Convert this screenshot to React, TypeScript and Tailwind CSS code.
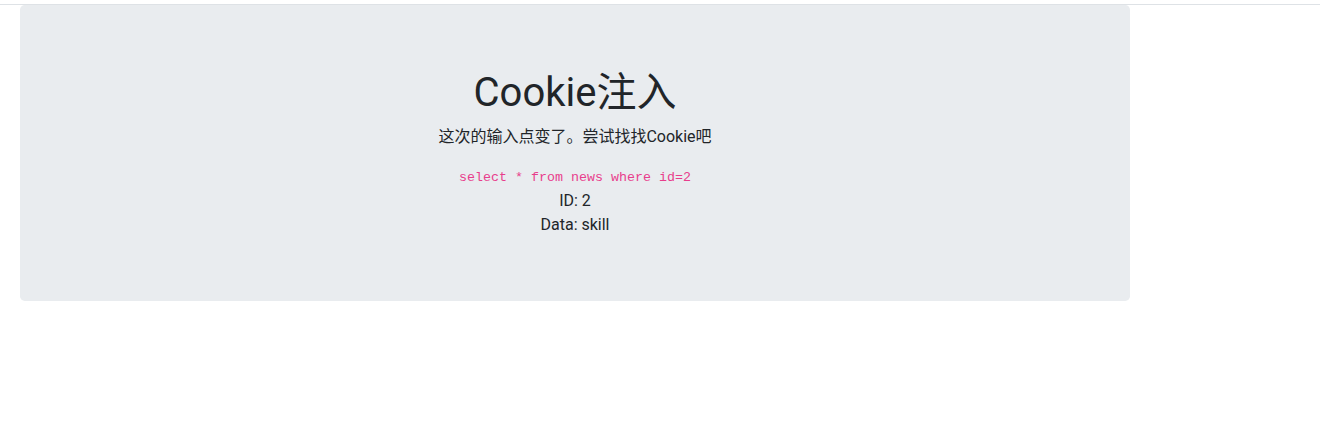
export default function App() {
  return (
    <div
      className="min-h-[446px] bg-white text-[#212529]"
      style={{ fontFamily: 'Roboto, "Noto Sans CJK SC", sans-serif' }}
    >
      <div className="h-[5px] border-b border-[#dee2e6]" />
      <div className="pl-[20px] w-[1130px]">
        <div className="bg-[#e9ecef] rounded-[4.8px] px-8 pt-[64px] pb-[64px] text-center">
          <h1 className="text-[40px] leading-[48px] font-normal mb-2">Cookie注入</h1>
          <p className="text-[16px] leading-[24px] mb-4">这次的输入点变了。尝试找找Cookie吧</p>
          <div className="text-[16px] leading-[22px]">
            <code
              className="text-[#e83e8c] text-[13.33px]"
              style={{ fontFamily: '"Liberation Mono", monospace' }}
            >
              select * from news where id=2
            </code>
          </div>
          <div className="text-[16px] leading-[24px]">ID: 2</div>
          <div className="text-[16px] leading-[24px]">Data: skill</div>
        </div>
      </div>
    </div>
  );
}
